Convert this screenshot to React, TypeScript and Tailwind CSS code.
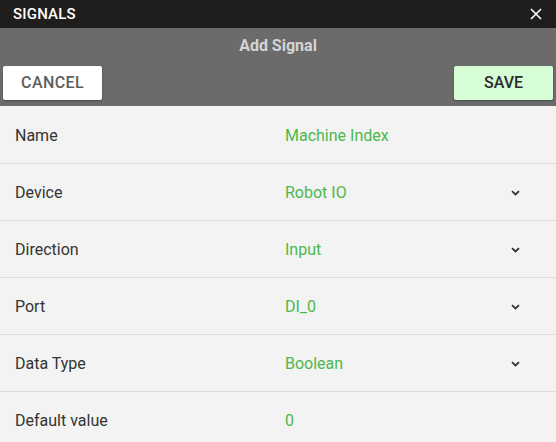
const rows = [
  { label: 'Name', value: 'Machine Index', select: false },
  { label: 'Device', value: 'Robot IO', select: true },
  { label: 'Direction', value: 'Input', select: true },
  { label: 'Port', value: 'DI_0', select: true },
  { label: 'Data Type', value: 'Boolean', select: true },
  { label: 'Default value', value: '0', select: false },
];

function Chevron() {
  return (
    <svg width="9" height="6" viewBox="0 0 9 6" className="text-[#333]">
      <path d="M1 1.2 L4.5 4.5 L8 1.2" fill="none" stroke="currentColor" strokeWidth="1.8" />
    </svg>
  );
}

export default function App() {
  return (
    <div className="w-[556px] h-[442px] overflow-hidden bg-[#f2f3f2] font-['Roboto',sans-serif]">
      <div className="h-[28px] bg-[#1f1e1c] flex items-center justify-between pl-[13px] pr-[14px]">
        <span className="text-white text-[15px] font-medium tracking-[0.2px]">SIGNALS</span>
        <svg width="12" height="12" viewBox="0 0 12 12">
          <path d="M1 1 L11 11 M11 1 L1 11" stroke="white" strokeWidth="1.6" />
        </svg>
      </div>
      <div className="h-[78px] bg-[#6b6b6b] flex flex-col px-[3px]">
        <div className="h-[38px] flex items-center justify-center text-[#d4d4d4] text-[16px] font-bold pb-[3px]">
          Add Signal
        </div>
        <div className="flex justify-between">
          <button className="w-[99px] h-[34px] bg-white rounded-[2px] shadow-[0_1px_2px_rgba(0,0,0,0.3)] text-[#5e5e5e] text-[16px] font-medium tracking-[0.4px]">
            CANCEL
          </button>
          <button className="w-[99px] h-[34px] bg-[#d6fdd6] rounded-[2px] shadow-[0_1px_2px_rgba(0,0,0,0.3)] text-[#2b2b2b] text-[16px] font-medium">
            SAVE
          </button>
        </div>
      </div>
      <div className="flex flex-col pt-[1px]">
        {rows.map((r) => (
          <div key={r.label} className="h-[57px] flex items-center border-b border-[#dcdddc] pl-[15px] pr-[36px] text-[16px] pt-[2px]">
            <span className="w-[270px] text-[#333]">{r.label}</span>
            <span className="flex-1 text-[#4cb84c]">{r.value}</span>
            {r.select && <Chevron />}
          </div>
        ))}
      </div>
    </div>
  );
}
